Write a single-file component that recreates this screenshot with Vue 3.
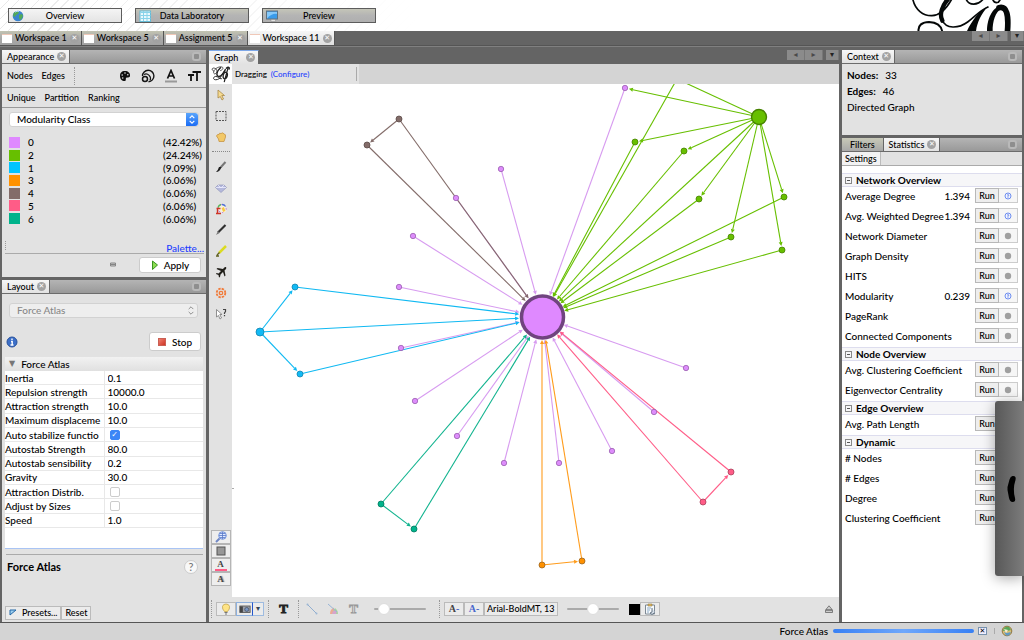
<script setup>
import { ref } from 'vue'

const perspectives = [
  { name: 'Overview', icon: 'globe', active: true },
  { name: 'Data Laboratory', icon: 'grid', active: false },
  { name: 'Preview', icon: 'screen', active: false },
]
const workspaces = ['Workspace 1', 'Workspace 5', 'Assignment 5', 'Workspace 11']

const partitions = [
  { id: '0', color: '#df89ff', share: '42.42%' },
  { id: '2', color: '#67bf00', share: '24.24%' },
  { id: '1', color: '#00c4ff', share: '9.09%' },
  { id: '3', color: '#ff9100', share: '6.06%' },
  { id: '4', color: '#836c69', share: '6.06%' },
  { id: '5', color: '#ff5c87', share: '6.06%' },
  { id: '6', color: '#00b38b', share: '6.06%' },
]

const properties = ref([
  { name: 'Inertia', value: '0.1' },
  { name: 'Repulsion strength', value: '10000.0' },
  { name: 'Attraction strength', value: '10.0' },
  { name: 'Maximum displaceme', value: '10.0' },
  { name: 'Auto stabilize functio', checked: true },
  { name: 'Autostab Strength', value: '80.0' },
  { name: 'Autostab sensibility', value: '0.2' },
  { name: 'Gravity', value: '30.0' },
  { name: 'Attraction Distrib.', checked: false },
  { name: 'Adjust by Sizes', checked: false },
  { name: 'Speed', value: '1.0' },
])

const sections = [
  {
    title: 'Network Overview',
    rows: [
      { name: 'Average Degree', value: '1.394' },
      { name: 'Avg. Weighted Degree', value: '1.394' },
      { name: 'Network Diameter' },
      { name: 'Graph Density' },
      { name: 'HITS' },
      { name: 'Modularity', value: '0.239' },
      { name: 'PageRank' },
      { name: 'Connected Components' },
    ],
  },
  { title: 'Node Overview', rows: [{ name: 'Avg. Clustering Coefficient' }, { name: 'Eigenvector Centrality' }] },
  { title: 'Edge Overview', rows: [{ name: 'Avg. Path Length' }] },
  { title: 'Dynamic', rows: [{ name: '# Nodes' }, { name: '# Edges' }, { name: 'Degree' }, { name: 'Clustering Coefficient' }] },
]

const palette = {
  purple: ['#dd8cfb', '#9a60b0', '#d79bf0'],
  green: ['#67bf00', '#468200', '#67bf00'],
  blue: ['#12baf5', '#1484ae', '#10b9f2'],
  orange: ['#ff9100', '#9c6520', '#ff9c1c'],
  brown: ['#836c69', '#5b4a48', '#836c69'],
  pink: ['#ff5c87', '#a8405c', '#ff5c87'],
  teal: ['#00b38b', '#007a5f', '#10b38e'],
}

const hub = { x: 542, y: 317, r: 22, group: 'purple' }
const make = (group, points, r = 3) => points.map(([x, y]) => ({ x, y, r, group }))
const purple = make('purple', [
  [625, 88], [501, 169], [456, 198], [413, 236], [399, 287], [401, 348], [415, 401],
  [457, 436], [504, 463], [559, 463], [612, 451], [654, 412], [686, 368],
])
const source = { x: 759, y: 117, r: 7.5, group: 'green' }
const green = make('green', [[677, 79], [635, 142], [684, 151], [699, 199], [784, 197], [731, 237], [782, 250]])
const blue = make('blue', [[260, 332], [295, 287], [300, 374]])
blue[0].r = 4
const brown = make('brown', [[399, 119], [367, 145]])
const teal = make('teal', [[381, 504], [414, 529]])
const orange = make('orange', [[542, 565], [582, 561]])
const pink = make('pink', [[703, 502], [731, 472]])
const leaves = [...purple, ...green, source, ...blue, ...brown, ...teal, ...orange, ...pink]

function edge(a, b) {
  const dx = b.x - a.x
  const dy = b.y - a.y
  const d = Math.hypot(dx, dy)
  const ux = dx / d
  const uy = dy / d
  const tx = b.x - ux * (b.r + 1)
  const ty = b.y - uy * (b.r + 1)
  const bx = tx - ux * 4
  const by = ty - uy * 4
  return {
    x1: a.x, y1: a.y, x2: bx, y2: by,
    head: `${tx},${ty} ${bx - uy * 2},${by + ux * 2} ${bx + uy * 2},${by - ux * 2}`,
    color: palette[a.group][2],
  }
}

const edges = [
  ...leaves.map((n) => edge(n, hub)),
  ...green.map((n) => edge(source, n)),
  edge(source, purple[0]),
  edge(blue[0], blue[1]),
  edge(blue[0], blue[2]),
  edge(brown[0], brown[1]),
  edge(teal[0], teal[1]),
  edge(orange[0], orange[1]),
  edge(pink[0], pink[1]),
]

const tools = ['pointer', 'marquee', 'hand', 'brush', 'gem', 'bucket', 'pencil', 'marker', 'plane', 'flower', 'query']
</script>

<template>
  <div class="app">
    <header class="banner">
      <nav class="perspectives">
        <button v-for="p in perspectives" :key="p.name" type="button" class="perspective" :class="{ active: p.active }">
          <svg class="p-icon" viewBox="0 0 12 12" aria-hidden="true">
            <g v-if="p.icon === 'globe'">
              <circle cx="6" cy="6" r="5.3" fill="#3a83cf" />
              <path d="M2 2.500L5 1l2 1-1 2-2 1-1 2-2-1zM7 5l3-1 1 2-1.500 3L8 10 7 8z" fill="#53a956" />
              <path d="M3 2.200q2-1.500 4-.8" stroke="#b5dcf7" fill="none" />
            </g>
            <g v-else-if="p.icon === 'grid'">
              <rect x="1" y="1" width="10.500" height="10.500" fill="#e9f8fd" stroke="#66bbd6" />
              <path d="M1.500 2.500h10M4.500 1v10M1.500 5.500h10M1.500 8.500h10M8 1v10" stroke="#88d3ea" />
            </g>
            <g v-else>
              <rect x=".5" y="1" width="11" height="8" fill="#3a9bea" stroke="#60717e" />
              <path d="M1 8.500Q6 3 11 4V2H1z" fill="#86c9fa" />
              <path d="M5 9.500h4l1 2H5z" fill="#e2e2e2" stroke="#888" stroke-width=".5" />
            </g>
          </svg>
          <span>{{ p.name }}</span>
        </button>
      </nav>
      <svg class="logo" viewBox="396 0 312 93" aria-label="Gephi" role="img">
        <g fill="none" stroke="#050808" stroke-linecap="round">
          <path d="M398-4C405 30 430 48 456 47C482 46 502 22 516-4" stroke-width="5" />
          <path d="M507-6C486 16 477 44 487 62" stroke-width="13" />
          <path d="M486 60C498 88 535 86 563 66C585 50 600 31 624 21" stroke-width="5" />
          <path d="M416 96C412 75 428 66 447 66C468 67 484 76 487 96" stroke-width="6" />
          <path d="M558-3C567 18 593 17 609-2M638-2Q643 11 655 7L662-3" stroke-width="5" />
          <path d="M657 23C680 18 687 42 682 98" stroke-width="17" />
        </g>
        <path d="M624 19C596 34 576 62 561 93H588C592 66 603 44 624 19z" fill="#050808" />
        <path d="M621 93C621 60 635 20 666 17L665 26C646 34 637 66 638 93z" fill="#050808" />
      </svg>
    </header>

    <div class="workspaces">
      <div v-for="(w, i) in workspaces" :key="w" class="workspace" :class="{ active: i === 3 }">
        <span class="page"></span><span>{{ w }}</span>
        <button type="button" class="close" :aria-label="'Close ' + w"></button>
      </div>
      <div class="arrows">
        <button type="button" aria-label="Previous workspace">◂</button><button type="button" aria-label="Next workspace">▸</button><button type="button" class="menu" aria-label="Workspace list">▾</button>
      </div>
    </div>

    <main class="desk">
      <div class="column">
        <section class="panel">
          <div class="tabs">
            <h2 class="tab active">Appearance <button type="button" class="close" aria-label="Close Appearance"></button></h2>
            <button type="button" class="dock" aria-label="Minimize Appearance"></button>
          </div>
          <div class="bar elements">
            <button type="button">Nodes</button><button type="button">Edges</button><i class="dots"></i>
            <span class="attributes">
              <button type="button" aria-label="Color">
                <svg viewBox="0 0 14 14"><path d="M7 2C3.500 2 2 4 2 7s2 5 4.500 5c2 0 1-2 1.500-3s4 0 4-2c.5-3-2-5-5-5z" fill="#111" /><circle cx="4.200" cy="6" r=".8" fill="#e2e2e2" /><circle cx="7" cy="4" r=".8" fill="#e2e2e2" /><circle cx="9.800" cy="5.700" r=".8" fill="#e2e2e2" /><circle cx="4.700" cy="9" r=".8" fill="#e2e2e2" /></svg>
              </button>
              <button type="button" aria-label="Size">
                <svg viewBox="0 0 14 14" fill="none" stroke="#151515"><path d="M1.500 7A5.700 5.700 0 1 1 7.500 12.700" stroke-width="1.400" /><path d="M3 5.500a4.500 4.500 0 0 1 6 6" stroke-width="1.200" /><circle cx="4" cy="10" r="2.500" stroke-width="1.500" /></svg>
              </button>
              <button type="button" aria-label="Label color">
                <svg viewBox="0 0 14 14"><path d="M3.500 9.500L7 1.500l3.500 8M4.800 7h4.400" fill="none" stroke="#111" stroke-width="1.700" /><path d="M1 12.500h12" stroke="#999" stroke-width="2" /></svg>
              </button>
              <button type="button" aria-label="Label size">
                <svg viewBox="0 0 14 14" fill="none" stroke="#111" stroke-width="1.800"><path d="M1 6h6M4 6v6M5.500 3H14M10 3v9" /></svg>
              </button>
            </span>
          </div>
          <div class="bar modes">
            <button type="button">Unique</button><button type="button">Partition</button><button type="button">Ranking</button>
          </div>
          <div class="appearance-body">
            <div class="combo">
              <select aria-label="Partition attribute"><option>Modularity Class</option></select>
              <svg class="combo-cap blue" viewBox="0 0 12 14" aria-hidden="true"><path d="M3.500 5.500L6 3l2.500 2.500M3.500 8.500L6 11l2.500-2.500" fill="none" stroke="#fff" stroke-width="1.200" /></svg>
            </div>
            <ul class="classes">
              <li v-for="p in partitions" :key="p.id">
                <i class="swatch" :style="{ background: p.color }"></i><span>{{ p.id }}</span><span class="share">({{ p.share }})</span>
              </li>
            </ul>
            <div class="palette-row"><i class="dots"></i><a href="#">Palette...</a></div>
            <div class="apply-row">
              <svg class="link-icon" viewBox="0 0 8 5" aria-hidden="true"><path d="M1.500 1h5v3h-5zM1 2.500h6" fill="#ccc" stroke="#858585" /></svg>
              <button type="button" class="white-btn apply">
                <svg viewBox="0 0 8 10" aria-hidden="true"><path d="M1.500 1L6.500 5l-5 4.500z" fill="#8cdc52" stroke="#39941f" /></svg>Apply
              </button>
            </div>
          </div>
        </section>

        <section class="panel grow">
          <div class="tabs">
            <h2 class="tab active">Layout <button type="button" class="close" aria-label="Close Layout"></button></h2>
            <button type="button" class="dock" aria-label="Minimize Layout"></button>
          </div>
          <div class="layout-body">
            <div class="combo disabled">
              <select aria-label="Layout algorithm" disabled><option>Force Atlas</option></select>
              <svg class="combo-cap" viewBox="0 0 12 14" aria-hidden="true"><path d="M3.500 5.500L6 3l2.500 2.500M3.500 8.500L6 11l2.500-2.500" fill="none" stroke="#888" /></svg>
            </div>
            <div class="stop-row">
              <button type="button" class="info" aria-label="About this layout">
                <svg viewBox="0 0 12 12"><circle cx="6" cy="6" r="5" fill="#3c6fc8" stroke="#28519b" /><path d="M6 2.500v1.500M5 5.500h1.200V9M4.500 9h3" stroke="#fff" stroke-width="1.400" fill="none" /></svg>
              </button>
              <button type="button" class="white-btn stop"><i class="stop-icon"></i>Stop</button>
            </div>
            <div class="sheet">
              <h3 class="sheet-title"><span>▼</span>Force Atlas</h3>
              <table class="properties">
                <tbody>
                  <tr v-for="(p, i) in properties" :key="p.name">
                    <th scope="row"><label :for="'prop-' + i">{{ p.name }}</label></th>
                    <td>
                      <input v-if="p.value !== undefined" :id="'prop-' + i" v-model="p.value" type="text" />
                      <input v-else :id="'prop-' + i" v-model="p.checked" type="checkbox" />
                    </td>
                  </tr>
                </tbody>
              </table>
            </div>
            <div class="describe"><strong>Force Atlas</strong><button type="button" aria-label="Help">?</button></div>
            <div class="preset-row">
              <button type="button" class="flat"><svg viewBox="0 0 8 8" aria-hidden="true"><path d="M1 1h6L1 6z" fill="#9ed0ef" stroke="#2468a8" /></svg>Presets...</button><button type="button" class="flat">Reset</button>
            </div>
          </div>
        </section>
      </div>

      <section class="graph">
        <div class="graph-tabs">
          <h2 class="tab active focus">Graph <button type="button" class="close" aria-label="Close Graph"></button></h2>
          <div class="arrows">
            <button type="button" aria-label="Previous document">◂</button><button type="button" aria-label="Next document">▸</button><button type="button" class="menu" aria-label="Document list">▾</button>
          </div>
        </div>
        <div class="graph-bar">
          <svg class="mini-logo" viewBox="0 0 24 20" role="img" aria-label="Gephi">
            <g fill="none" stroke="#222" stroke-linecap="round">
              <path d="M5 7C2 6 3 3 6 4S9 9 6 10C3 9 6 3 12 2.500c4 0 3 3 0 4" stroke-width=".8" />
              <path d="M12 3.500C8 7 7 12 10 12.500s5-3 7-7" stroke-width="1.500" />
              <path d="M16 7c-3 4-4 9-9 9-3 0-3-3 0-3.500 3 0 3 3 6 2.500" />
              <path d="M16 15c-2.500-1-1-7 1.500-7 3 .5 2 7-1.500 7M20 3l-4 15M18 4c2-2 4-1 3 1" stroke-width="1.300" />
            </g>
          </svg>
          <span class="mode">Dragging</span><a href="#">(Configure)</a><i class="bar-end"></i>
        </div>
        <div class="stage">
          <div class="toolbox">
            <template v-for="t in tools" :key="t">
              <button type="button" class="tool" :aria-label="t">
                <svg viewBox="0 0 12 12">
                  <path v-if="t === 'pointer'" d="M3 1l6.500 5.500H6.800L8.500 10 7 11 5.300 7.500 3 9z" fill="#f7dc91" stroke="#a88847" stroke-width=".8" />
                  <rect v-else-if="t === 'marquee'" x="1" y="1.500" width="10" height="9" fill="none" stroke="#555" stroke-dasharray="2 1" />
                  <path v-else-if="t === 'hand'" d="M1.500 5Q2 3 4 3.500 4 1.500 6 2.500q2-1.500 3 .5 2 0 1.500 3L9 10.500H4L3.500 8z" fill="#f2c867" stroke="#c69445" stroke-width=".8" />
                  <g v-else-if="t === 'brush'"><path d="M10.500 1L5.500 6.500" stroke="#777" stroke-width="2" /><path d="M6.500 6Q5 11 1 11q2-1.500 3-5z" fill="#222" /></g>
                  <g v-else-if="t === 'gem'"><path d="M3 3h6l2.500 2.500L6 10.500.5 5.500z" fill="#b5b9dc" stroke="#8a8fb6" stroke-width=".6" /><path d="M3 3l3 3 3-3M1 5.500h10" stroke="#eef" fill="none" stroke-width=".8" /></g>
                  <g v-else-if="t === 'bucket'"><circle cx="7" cy="5.500" r="4" fill="#f4efe4" stroke="#b85fd0" stroke-dasharray="2 2" /><path d="M3 4.500a4.300 4.300 0 0 1 3-3" stroke="#57b85c" fill="none" stroke-width="1.400" /><path d="M7 1.500a4 4 0 0 1 3.500 2" stroke="#4f73d8" fill="none" stroke-width="1.400" /><path d="M6 5l3-1.500L11 8 8 9.500z" fill="#f7c742" stroke="#fff" stroke-width=".6" /><path d="M1.500 5.500h4M1 10.500h5M2.500 6v4" stroke="#ce3427" stroke-width="1.400" /></g>
                  <g v-else-if="t === 'pencil'"><path d="M10.500 1L3 8.500" stroke="#303030" stroke-width="2.200" /><path d="M3 7L1 11l3.500-2z" fill="#777" /></g>
                  <g v-else-if="t === 'marker'"><path d="M11 1L4 8" stroke="#dbdb22" stroke-width="2.500" /><path d="M4.500 7.500L2 10M1 11h3" stroke="#60601f" stroke-width="1.400" /></g>
                  <path v-else-if="t === 'plane'" d="M11 1Q9.500.5 8 3L2.500 2 1.500 3 6 5 3.500 7.500 1.500 7 1 8l2.500 1L4 11.500l1-.5.500-2.500L8 6l1.500 4.500 1-1L9.500 4.500Q12 2.500 11 1z" fill="#201e19" />
                  <g v-else-if="t === 'flower'" fill="none" stroke="#f17b3a"><circle cx="6" cy="6" r="4.300" stroke-width="1.800" stroke-dasharray="2.400 1" /><circle cx="6" cy="6" r="1.700" stroke-width="1.300" /></g>
                  <g v-else><path d="M1.500 1.500l5.500 5H4.800L6.500 10 5 11 3.500 7.500 1.500 9z" fill="#fff" stroke="#777" stroke-width=".8" /><path d="M8 1.500h2.500v2L9.500 5v1M9.500 7v1.200" fill="none" stroke="#444" stroke-width="1.200" /></g>
                </svg>
              </button>
              <i v-if="t === 'hand'" class="tool-sep"></i>
            </template>
            <div class="tool-foot">
              <button type="button" aria-label="Center on graph"><svg viewBox="0 0 14 12"><circle cx="8.500" cy="4.500" r="3.800" fill="#dfe8ff" stroke="#6c8dd8" /><path d="M5 4.500h7M8.500 1v7M6 2.500h5M6 6.500h5" stroke="#5878c8" stroke-width=".8" /><path d="M5.500 7.500L2 11" stroke="#6f87c5" stroke-width="2" /></svg></button>
              <button type="button" aria-label="Reset colors"><svg viewBox="0 0 14 12"><rect x="3" y="2" width="8" height="8" fill="#979797" stroke="#555" /></svg></button>
              <button type="button" class="glyph pinkline" aria-label="Reset label colors">A</button>
              <button type="button" class="glyph shaded" aria-label="Reset label visibility">A</button>
            </div>
          </div>
          <svg class="canvas" viewBox="232 84 607 513" preserveAspectRatio="xMidYMid meet" role="img" aria-label="Network graph">
            <g v-for="(e, i) in edges" :key="'e' + i">
              <line :x1="e.x1" :y1="e.y1" :x2="e.x2" :y2="e.y2" :stroke="e.color" stroke-width="1.100" />
              <polygon :points="e.head" :fill="e.color" />
            </g>
            <circle
              v-for="(n, i) in leaves" :key="'n' + i" :cx="n.x" :cy="n.y" :r="n.group === 'purple' ? n.r - 0.3 : n.r"
              :fill="palette[n.group][0]" :stroke="palette[n.group][1]" :stroke-width="n.r > 5 ? 1.400 : 0.800"
            />
            <circle cx="542.500" cy="317" r="21" fill="#df89ff" stroke="#70447f" stroke-width="3.500" />
            <path d="M232 488.500h2" stroke="#aaa" />
          </svg>
        </div>
        <div class="graph-foot">
          <i class="dots tall"></i>
          <div class="group first">
            <button type="button" class="cell" aria-label="Background"><svg viewBox="0 0 12 12"><path d="M4.500 8.500Q2 6 2.500 3.500T6 1t3.500 2.500-2 5z" fill="#ffe486" stroke="#bf9d3d" stroke-width=".7" /><path d="M4.500 9.500h3M5 11h2" stroke="#777" /></svg></button>
            <button type="button" class="cell chosen" aria-label="Screenshot"><svg viewBox="0 0 14 12"><rect x="1" y="2.500" width="12" height="7.500" fill="#9b9fa8" stroke="#555" /><rect x="1" y="3" width="3.500" height="7" fill="#444" /><circle cx="9" cy="6.500" r="2.300" fill="#7895c5" stroke="#4b5668" /></svg></button>
            <button type="button" class="cell caret" aria-label="Screenshot options">▾</button>
          </div>
          <i class="dots"></i>
          <button type="button" class="plain big-t" aria-label="Show node labels">T</button>
          <i class="dots"></i>
          <div class="group spaced">
            <button type="button" class="plain" aria-label="Show edges"><svg viewBox="0 0 12 12"><path d="M1.500 1.500l9 9" stroke="#91aed0" /><circle cx="1.500" cy="1.500" r="1" fill="#9ab6d4" /><circle cx="10.500" cy="10.500" r="1" fill="#9ab6d4" /></svg></button>
            <button type="button" class="plain" aria-label="Edge color"><svg viewBox="0 0 12 12"><path d="M3 11A7 7 0 0 1 7 4.500V11z" fill="#edaa93" /><path d="M6 11q0-4 2-6 3 2 3 6z" fill="#a8d59d" /><path d="M5 11q1-5 4-3 1 1 0 3z" fill="#d5a5cd" /><path d="M1 1l9 8" stroke="#98b5d6" /></svg></button>
            <button type="button" class="plain big-t hollow" aria-label="Show edge labels">T</button>
          </div>
          <input type="range" class="slider edge-slider" min="0" max="100" value="10" aria-label="Edge weight scale" />
          <i class="dots"></i>
          <div class="group">
            <button type="button" class="cell glyph" aria-label="Label size mode">A<b>-</b></button>
            <button type="button" class="cell glyph bluish" aria-label="Label color mode">A<b>-</b></button>
            <button type="button" class="cell font">Arial-BoldMT, 13</button>
          </div>
          <input type="range" class="slider" min="0" max="100" value="50" aria-label="Label font scale" />
          <div class="group">
            <button type="button" class="black" aria-label="Label color"></button>
            <button type="button" class="cell" aria-label="Attributes"><svg viewBox="0 0 12 12"><path d="M1.500 2h9v9h-9z" fill="#f7fafc" stroke="#7d8995" /><path d="M4 1h4v2H4z" fill="#e4b95b" stroke="#8e784a" stroke-width=".6" /><path d="M3 5h4M3 7h3M3 9h2" stroke="#8aa9c6" /><path d="M8 5v4l-2 1 2 1.500 3-2" fill="#d5dee8" stroke="#6a7887" /></svg></button>
          </div>
          <button type="button" class="plain eject" aria-label="Expand settings"><svg viewBox="0 0 8 8"><path d="M4 .8L7.500 5v2.500h-7V5z" fill="#ccc" stroke="#666" stroke-width=".8" /><path d="M1 5h6" stroke="#444" /></svg></button>
        </div>
      </section>

      <div class="column">
        <section class="panel">
          <div class="tabs">
            <h2 class="tab active">Context <button type="button" class="close" aria-label="Close Context"></button></h2>
            <button type="button" class="dock" aria-label="Minimize Context"></button>
          </div>
          <dl class="context">
            <div><dt>Nodes:</dt><dd>33</dd></div>
            <div><dt>Edges:</dt><dd>46</dd></div>
            <div>Directed Graph</div>
          </dl>
        </section>
        <section class="panel grow">
          <div class="tabs">
            <h2 class="tab filters">Filters</h2>
            <h2 class="tab active">Statistics <button type="button" class="close" aria-label="Close Statistics"></button></h2>
            <button type="button" class="dock" aria-label="Minimize Statistics"></button>
          </div>
          <div class="settings"><button type="button">Settings</button></div>
          <div class="stats">
            <template v-for="s in sections" :key="s.title">
              <h3><i class="fold"></i>{{ s.title }}</h3>
              <div v-for="r in s.rows" :key="r.name" class="stat">
                <span>{{ r.name }}</span><span class="value">{{ r.value }}</span>
                <button type="button" class="run" :aria-label="'Run ' + r.name">Run</button>
                <button type="button" class="report" :disabled="!r.value" :aria-label="'Report for ' + r.name">
                  <svg viewBox="0 0 8 8">
                    <g v-if="r.value"><circle cx="4" cy="4" r="3" fill="#f2f5ff" stroke="#6f8ff0" /><path d="M3 3.200q1-1.200 2 0L4 4.400V5.800" fill="none" stroke="#5679e8" stroke-width=".8" /></g>
                    <circle v-else cx="4" cy="4" r="3.200" fill="#a0a0a0" />
                  </svg>
                </button>
              </div>
            </template>
          </div>
        </section>
      </div>
    </main>

    <footer class="status">
      <span id="task-name">Force Atlas</span>
      <div class="progress" role="progressbar" aria-labelledby="task-name"></div>
      <button type="button" class="cancel" aria-label="Cancel task">✕</button>
      <i class="split"></i>
      <button type="button" class="update" aria-label="Updates"><svg viewBox="0 0 12 12"><circle cx="6" cy="6" r="4.800" fill="#d9be75" stroke="#8e7741" /><path d="M2 6q1-5 6-4l2 3-4 1z" fill="#5aa95b" /><path d="M3 7l3 1 4-1-2 3.500H5z" fill="#5e9ac7" /><path d="M3 4l4 1-2 3" fill="#f6eed4" /></svg></button>
    </footer>

    <button type="button" class="drawer" aria-label="Open drawer">
      <svg viewBox="0 0 10 28"><path d="M5.500 1Q9.500.5 8.500 5 5.500 14 8 23 9 27 5.500 27 3 27 2 23L.5 15V12L2.500 4.500Q3.500 1.300 5.500 1z" fill="#000" /></svg>
    </button>
  </div>
</template>

<style>
body { margin: 0; background: #d4d4d4; }
</style>

<style scoped>
.app {
  position: relative; display: flex; flex-direction: column; min-height: 100vh; overflow: hidden;
  font-family: Lato, "Noto Sans", sans-serif; font-size: 10px; font-weight: 500; line-height: 12px; color: #000; background: #646464;
}
.app *, .app *::before { box-sizing: border-box; }
button, input, select { font: inherit; color: inherit; margin: 0; padding: 0; border: 0; background: none; }
svg { display: block; flex: none; }
h2, h3, ul, dl, dd { margin: 0; padding: 0; font-size: inherit; font-weight: inherit; }
a { color: #1f3fff; text-decoration: none; }
i { display: block; }

.banner { display: flex; justify-content: space-between; height: 31px; background: #fff; }
.perspectives {
  display: flex; gap: 13px; align-items: flex-start; padding: 8px 40px 0 8px;
  background: linear-gradient(90deg, transparent, #fff), repeating-linear-gradient(135deg, #fff 0 6px, #e9e9e9 6px 7px);
}
.perspective {
  display: flex; align-items: center; width: 114px; height: 15px; padding: 0 15px 0 3px; border: 1px solid #5c5c5c;
  background: linear-gradient(#c4c5b8, #b4b4b4 50%, #afafaf); font-size: 9px;
}
.perspective.active { background: linear-gradient(#f4f4f4, #e4e4e4); }
.perspective span { flex: 1; text-align: center; }
.p-icon { width: 12px; height: 12px; }
.logo { width: 104px; height: 31px; margin-right: 8px; }

.workspaces { display: flex; height: 15px; background: #646464; border-bottom: 1px solid #555; font-size: 9px; }
.workspace {
  display: flex; align-items: center; gap: 3px; height: 14px; padding: 0 2px; border-right: 1px solid #555;
  background: linear-gradient(#c3c4b2, #aaa 50%, #a2a2a2);
}
.workspace.active { background: linear-gradient(#f6f6f6, #dedede); }
.page { width: 10px; height: 9px; background: #fff; border-top: 1px solid #f0c8b8; }
.close { position: relative; flex: none; width: 9px; height: 9px; border-radius: 50%; background: #a2a2a2; }
.close::before { content: "✕"; position: absolute; inset: 0; font: bold 7px/9px "DejaVu Sans", sans-serif; color: #fff; text-align: center; }
.arrows { display: flex; margin-left: auto; }
.arrows button { width: 18px; height: 10px; background: #8b8b8b; border-right: 1px solid #777; color: #4a4a4a; font: 8px/8px "DejaVu Sans", sans-serif; }
.arrows .menu { width: 13px; margin-left: 3px; color: #222; }

.desk {
  flex: 1; display: grid; grid-template-columns: 204px minmax(0, 1fr) 180px; column-gap: 3px; padding: 3px 2px 0;
  background: #646464; border-top: 1px solid #808080;
}
.column { display: flex; flex-direction: column; gap: 3px; min-height: 0; }
.panel { background: #e2e2e2; display: flex; flex-direction: column; }
.grow { flex: 1; }
.tabs { display: flex; height: 14px; background: linear-gradient(#b4b4b4, #999); border-bottom: 1px solid #6c6c6c; }
.tab { display: flex; align-items: center; gap: 3px; height: 13px; padding: 0 3px 0 5px; border-right: 1px solid #666; font-size: 9px; background: linear-gradient(#c8c9b8, #a8a8a8); }
.tab.active { background: linear-gradient(#f6f6f6, #e2e2e2); }
.tab.filters { padding: 0 8px; }
.tab.focus { border-top: 1px solid #7da7e8; gap: 8px; height: 14px; }
.dock { width: 9px; height: 9px; margin: 2px 5px 0 auto; border: 2px solid #b9b9b9; border-radius: 3px; background: #8e8e8e; }
.dots { width: 1px; height: 18px; border-left: 1px dotted #999; }

.bar { display: flex; align-items: center; padding: 0 5px; border-bottom: 1px solid #999; font-size: 9px; }
.elements { height: 24px; gap: 9px; }
.attributes { display: flex; gap: 9px; margin-left: auto; }
.attributes svg { width: 14px; height: 14px; }
.modes { height: 20px; gap: 9px; }
.appearance-body { padding-top: 4px; }
.combo { position: relative; display: flex; margin: 0 7px; height: 15px; background: #fff; border: 1px solid #d2d2d2; border-radius: 3px; }
.combo select { flex: 1; appearance: none; padding-left: 7px; line-height: 13px; }
.combo select:disabled { opacity: 1; color: #888; }
.combo-cap { width: 12px; height: 13px; }
.combo-cap.blue { background: linear-gradient(#5aa5fb, #1b6cf5); border-radius: 0 3px 3px 0; }
.combo.disabled { background: #eeeeee; margin: 0 8px 0 7px; }
.classes { display: grid; grid-auto-rows: 1fr; height: 89px; margin: 9px 5px 0 7px; list-style: none; }
.classes li { display: flex; align-items: center; }
.swatch { width: 11px; height: 11px; margin-right: 8px; }
.share { width: 38px; margin-left: auto; }
.palette-row { display: flex; align-items: flex-end; justify-content: space-between; height: 29px; margin: 0 2px 0 3px; border-bottom: 1px solid #aaa; line-height: 10px; }
.palette-row .dots { height: 9px; margin-bottom: 3px; }
.apply-row { display: flex; align-items: center; justify-content: flex-end; height: 23px; padding: 0 5px 2px; }
.link-icon { width: 8px; height: 5px; margin-right: 22px; }
.white-btn { display: flex; align-items: center; justify-content: center; background: #fff; border: 1px solid #ccc; border-radius: 3px; }
.apply { width: 62px; height: 16px; gap: 5px; }
.apply svg { width: 8px; height: 10px; }

.layout-body { flex: 1; display: flex; flex-direction: column; padding: 9px 0 2px; }
.stop-row { display: flex; justify-content: space-between; align-items: center; margin: 14px 5px 0 4px; }
.info svg { width: 12px; height: 12px; }
.stop { width: 52px; height: 19px; gap: 6px; }
.stop-icon { width: 8px; height: 8px; background: linear-gradient(135deg, #ee8070, #cf3425); border: 1px solid #c96054; }
.sheet { height: 192px; margin: 6px 3px 0 3px; background: #fff; border-bottom: 1px solid #a9c4f4; }
.sheet-title { display: flex; align-items: center; gap: 6px; height: 14px; padding-left: 4px; background: linear-gradient(#f2f2f2, #e0e0e0); }
.sheet-title span { font: 8px/12px "DejaVu Sans", sans-serif; color: #777; }
.properties { width: 100%; height: 157px; border-collapse: collapse; table-layout: fixed; }
.properties th, .properties td { padding: 0; border-bottom: 1px solid #e8e8e8; line-height: 12px; text-align: left; font-weight: 500; white-space: nowrap; }
.properties th { width: 99px; border-right: 1px solid #e8e8e8; }
.properties td { padding-left: 3px; }
.properties input[type="text"] { display: block; width: 100%; height: 12px; }
.properties input[type="checkbox"] { display: block; appearance: none; width: 10px; height: 10px; margin-left: 2px; border: 1px solid #ccc; border-radius: 2px; background: #fff; }
.properties input:checked { border-color: #3c86f6; background: #3c86f6; }
.properties input:checked::before { content: "✓"; display: block; font: bold 8px/8px "DejaVu Sans", sans-serif; color: #fff; text-align: center; }
.describe { flex: 1; display: flex; justify-content: space-between; align-items: flex-start; margin: 5px 3px 0 4px; padding: 5px 5px 0 1px; border-top: 1px solid #aaa; font-size: 11px; line-height: 14px; }
.describe strong { font-weight: 700; }
.describe button { width: 14px; height: 14px; border-radius: 50%; background: #f8f8f8; border: 1px solid #ccc; color: #777; line-height: 12px; }
.preset-row { display: flex; padding-left: 3px; }
.flat { display: flex; align-items: center; gap: 5px; height: 14px; padding: 0 3px; border: 1px solid #bbb; background: #ececec; font-size: 9px; }
.flat svg { width: 8px; height: 8px; }

.graph { display: flex; flex-direction: column; min-width: 0; background: #e2e2e2; }
.graph-tabs { display: flex; height: 14px; background: #646464; }
.graph-bar { display: flex; align-items: center; height: 20px; background: linear-gradient(90deg, #e2e2e2 150px, #d4d4d4 150px); font-size: 8px; }
.mini-logo { width: 23px; height: 20px; background: #fff; }
.mode { margin: 0 4px 0 3px; }
.bar-end { width: 1px; height: 14px; margin-left: 47px; background: #aaa; }
.stage { flex: 1; display: flex; min-height: 0; }
.toolbox { display: flex; flex-direction: column; align-items: center; gap: 6px; width: 23px; padding: 3px 0 11px; }
.tool { display: grid; place-items: center; width: 20px; height: 15px; }
.tool svg { width: 12px; height: 12px; }
.tool-sep { width: 18px; height: 1px; margin: 1px 0; border-top: 1px dotted #888; }
.tool-foot { display: flex; flex-direction: column; margin-top: auto; }
.tool-foot button { display: grid; place-items: center; width: 20px; height: 14px; background: #eee; border: 1px solid #b5b5b5; }
.tool-foot svg { width: 14px; height: 12px; }
.glyph { font: bold 9px/10px "Liberation Serif", serif; color: #444; }
.tool-foot .pinkline { background: linear-gradient(#ff5c87, #ff5c87) center 10px / 12px 2px no-repeat #eee; line-height: 8px; padding-bottom: 3px; }
.tool-foot .shaded { text-shadow: 1px 0 1px #999; }
.canvas { flex: 1; min-width: 0; width: 100%; height: 100%; background: #fff; }

.graph-foot { display: flex; align-items: center; height: 25px; padding: 0 6px 1px 2px; }
.graph-foot .tall { margin-right: 4px; }
.group { display: flex; align-items: center; }
.cell { display: grid; place-items: center; width: 20px; height: 14px; border: 1px solid #bbb; background: #ebebeb; }
.cell svg, .plain svg { width: 12px; height: 12px; }
.cell.chosen { width: 17px; border-color: #8db0de; border-right: 1px solid #2455cb; }
.cell.caret { width: 11px; border-color: #9ebbe0; border-left: 0; font: 8px/8px "DejaVu Sans", sans-serif; color: #345; }
.first { margin-right: 4px; }
.plain { display: grid; place-items: center; width: 13px; height: 16px; }
.big-t { font: bold 13px/16px "Liberation Serif", serif; color: #222; margin: 0 8px; -webkit-text-stroke: 1px #222; }
.graph-foot .hollow { color: #e2e2e2; -webkit-text-stroke: 1px #999; margin: 0; }
.spaced { gap: 8px; margin: 0 14px 0 6px; }
.slider { appearance: none; width: 52px; height: 14px; }
.slider::-webkit-slider-runnable-track { height: 2px; background: #aaa; border-radius: 1px; }
.slider::-webkit-slider-thumb { appearance: none; width: 12px; height: 12px; margin-top: -5px; border-radius: 50%; background: #fff; border: 1px solid #ddd; }
.edge-slider { margin-right: 13px; }
.graph-foot .edge-slider + .dots { margin-right: 4px; }
.cell.glyph { display: flex; align-items: center; justify-content: center; font-size: 10px; }
.cell.glyph b, .bluish { color: #4968cc; }
.font { width: auto; padding: 0 2px; margin-right: 9px; font-size: 9px; }
.font, .black { flex: none; }
.black { width: 11px; height: 11px; margin-left: 10px; background: #000; }
.eject { margin-left: auto; width: 8px; }
.plain.eject svg { width: 8px; height: 8px; }

.context { height: 71px; padding: 3px 5px; line-height: 16px; }
.context div { display: flex; gap: 7px; }
.context dt { font-weight: 700; }
.settings { height: 14px; border-bottom: 1px solid #aaa; font-size: 9px; }
.settings button { display: block; height: 13px; padding: 0 3px; background: #f2f2f2; border-right: 1px solid #bbb; line-height: 12px; }
.stats { flex: 1; padding-top: 7px; background: #fff; }
.stats h3 { display: flex; align-items: center; gap: 4px; height: 14px; padding-left: 3px; border-top: 1px solid #dde; border-bottom: 1px solid #dde; background: #f6f6f8; font-weight: 700; }
.fold { width: 7px; height: 7px; border: 1px solid #888; display: grid; place-items: center; }
.fold::before { content: ""; width: 3px; height: 1px; background: #555; }
.stat { display: flex; align-items: center; height: 20px; padding: 0 4px 3px 3px; white-space: nowrap; }
.value { margin-left: auto; margin-right: 5px; }
.run { flex: none; width: 24px; height: 15px; border: 1px solid #b8b8b8; background: #eeeeee; font-size: 9px; line-height: 12px; }
.report { flex: none; display: grid; place-items: center; width: 19px; height: 15px; border: 1px solid #ccc; border-left: 0; background: #f6f6f6; }
.report svg { width: 8px; height: 8px; }

.status { display: flex; align-items: center; justify-content: flex-end; height: 18px; padding: 0 11px 1px 0; border-top: 1px solid #555; background: #d4d4d4; }
.progress { width: 141px; height: 4px; margin: 0 4px 0 5px; border-radius: 2px; background: linear-gradient(90deg, #3880f4, #6ea7fb 50%, #3880f4); }
.cancel { width: 9px; height: 8px; border: 1px solid #7892ad; background: #eef; font: 7px/6px "DejaVu Sans", sans-serif; }
.split { width: 1px; height: 6px; margin: 0 6px 0 7px; background: #aaa; }
.update svg { width: 12px; height: 12px; }

.drawer {
  position: absolute; top: 401px; right: 0; width: 29px; height: 175px; display: grid; place-items: center; padding-left: 4px;
  border-radius: 3px 0 0 3px; background: linear-gradient(90deg, #585858, #7c7c7c); box-shadow: 0 2px 14px rgba(0, 0, 0, .35);
}
.drawer svg { width: 10px; height: 28px; }
</style>
